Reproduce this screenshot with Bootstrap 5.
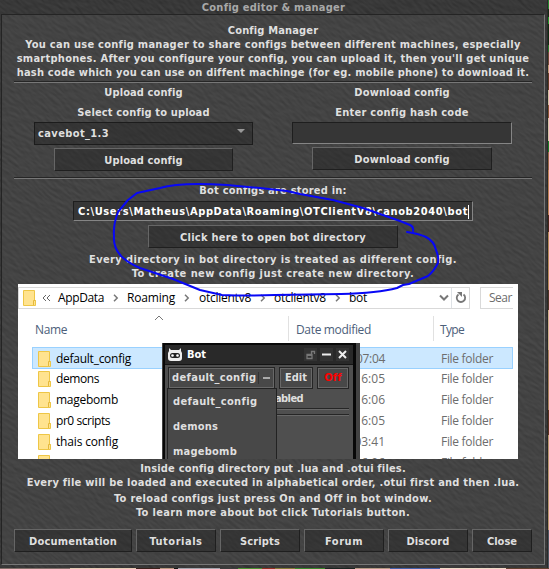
<!DOCTYPE html>
<html lang="en">
<head>
<meta charset="utf-8">
<meta name="viewport" content="width=device-width, initial-scale=1">
<title>Config editor &amp; manager</title>
<link rel="stylesheet" href="https://cdn.jsdelivr.net/npm/bootstrap@5.3.0/dist/css/bootstrap.min.css">
<style>
html,body{height:569px}
body{width:549px;background:#353535;color:#dfdfdf;font:bold 11px/14px "DejaVu Sans Condensed","DejaVu Sans",sans-serif;font-stretch:condensed}
.stage{width:549px;height:569px}
.stone{left:-156px;top:-146px;transform:rotate(40deg);pointer-events:none}
.layer{z-index:1;width:547px;height:568px}
.titlebar{height:14px;color:#a8a8a8}
.panel-body{height:551px;margin:0 2px 0 1px;border:1px solid #242424;border-right:1px solid #777;border-bottom:1px solid #777;background:rgba(255,255,255,.06);padding:8px 12px 0}
.ln{height:14px;line-height:16px;white-space:nowrap;text-align:center}
.rule{height:2px;background:#262626;border-bottom:1px solid #777}
.rule-top{margin:2px 0}
.col-half{width:259px}
.btn.stone-btn{font:inherit;color:#dfdfdf;height:23px;padding:0;border-radius:0;border:1px solid #1f1f1f;border-top-color:#666;border-left-color:#666;background:rgba(28,28,28,.36);line-height:23px;white-space:nowrap}
.combo{width:219px;height:23px;border:1px solid #1c1c1c;background:rgba(28,28,28,.36);padding:0 7px 0 3px}
.arrow-down{border:4px solid transparent;border-top:4px solid #999;border-bottom:0;margin-top:-6px}
.field{border:1px solid #1e1e1e;border-right-color:#858585;border-bottom-color:#858585;background:#363636;color:#fff;white-space:nowrap}
.caret{width:1px;height:14px;background:#fff}
.explorer{width:500px;height:175px;margin-left:4px;background:#fff;color:#000;font:12px/20px "Open Sans","Noto Sans",sans-serif;overflow:hidden}
.explorer span{white-space:nowrap}
.addr{width:452px;height:22px;margin-left:0;border:1px solid #d9d9d9}
.crumb{flex:none}
.search{width:33px;height:22px;border:1px solid #d9d9d9;border-right:0;color:#6d6d6d;padding-left:8px}
.heads{height:36px;color:#4c607a}
.vline{width:1px;height:25px;background:#e1e1e1;margin-top:7px}
.filerow{height:21px;width:481px;margin-left:14px;padding-left:6px;color:#6d6d6d}
.filerow .fname{color:#000;width:298px;margin-left:5px}
.filerow .ftime{width:31px;text-align:right;margin-right:56px}
.filerow.sel{background:#cce8ff;box-shadow:inset 0 0 0 1px #99d1ff;height:22px;margin-bottom:-1px;padding-top:1px}
.botwin{left:144px;top:59px;width:198px;height:116px;background:#424242;font:bold 11px/14px "DejaVu Sans Condensed","DejaVu Sans",sans-serif;font-stretch:condensed;color:#dfdfdf}
.botframe{width:193px;height:120px;background:#4f4f4f;border:solid #080808;border-width:2px 3px 0 2px;margin-left:1px}
.bottitle{height:20px;background:#292929;border-bottom:1px solid #151515;color:#fff;padding:0 4px 0 3px}
.sq{width:13px;height:13px;background:#333}
.dark-btn{height:22px;border:1px solid #252525;box-shadow:inset 0 0 0 1px #686868;background:#484848}
.drop{left:5px;top:45px;width:110px;height:76px;background:#484848;border:1px solid #222}
.drop div{height:25px;line-height:25px;padding-left:5px}
.game-r{left:547px;top:0;width:2px;height:569px;border-left:1px solid #2a2a2a;background:linear-gradient(#22832c 0 9px,#142b12 0 17px,#229026 0 24px,#0f2b10 0 45px,#287829 0 52px,#6c4732 0 65px,#c29b76 0 73px,#633a22 0 90px,#d4c0a0 0 105px,#875331 0 118px,#d9c4a7 0 141px,#1b7c23 0 152px,#9b6645 0 170px,#bd8053 0 215px,#4b2417 0 232px,#b78957 0 290px,#4d3323 0 310px,#d2b18b 0 350px,#a98059 0 410px,#5a301c 0 435px,#b9966c 0 530px,#4d5560 0)}
.game-b{left:0;top:568px;width:549px;height:1px;background:linear-gradient(90deg,#83706a 0 70px,#e8cdb5 0 136px,#3b201a 0 160px,#bd9a82 0 174px,#111 0 178px,#a5a5ae 0 220px,#3d3d3d 0 238px,#4c9431 0 262px,#962f22 0 275px,#857b35 0 295px,#3a8b2a 0 325px,#1b2520 0 355px,#b89b85 0 390px,#4462ad 0 440px,#f1dbc7 0 506px,#63412f 0)}
.ink{inset:0;z-index:5;pointer-events:none}
</style>
<script src="https://cdn.jsdelivr.net/npm/bootstrap@5.3.0/dist/js/bootstrap.bundle.min.js"></script>
</head>
<body class="m-0 overflow-hidden">
<svg width="0" height="0" class="position-absolute">
  <symbol id="folder" viewBox="0 0 13 16"><path d="M.5.5h11v10h1v5H.5z" fill="#ffe38f" stroke="#eec646"/><path d="M10.500 15v-4.500h2" fill="none" stroke="#e5b93c"/></symbol>
  <symbol id="chev" viewBox="0 0 6 8"><path d="M1 .8 4.200 4 1 7.200" fill="none" stroke="#777" stroke-width="1.500"/></symbol>
</svg>
<div class="stage position-relative overflow-hidden">
  <svg class="stone position-absolute" width="860" height="860">
    <filter id="rock" x="0" y="0" width="100%" height="100%" color-interpolation-filters="sRGB">
      <feTurbulence type="fractalNoise" baseFrequency=".1 .34" numOctaves="3" seed="8" result="n"/>
      <feDiffuseLighting in="n" surfaceScale=".5" lighting-color="#fff"><feDistantLight azimuth="240" elevation="55"/></feDiffuseLighting>
      <feColorMatrix values=".27 0 0 0 0  .27 0 0 0 0  .27 0 0 0 0  0 0 0 0 1"/>
    </filter>
    <rect width="860" height="860" filter="url(#rock)"/>
  </svg>
  <main class="layer position-relative">
    <header class="titlebar ln"><span data-w="143">Config editor &amp; manager</span></header>
    <section class="panel-body d-flex flex-column">
      <div class="ln"><span data-w="90">Config Manager</span></div>
      <div class="ln"><span data-w="494">You can use config manager to share configs between different machines, especially</span></div>
      <div class="ln"><span data-w="512">smartphones. After you configure your config, you can upload it, then you'll get unique</span></div>
      <div class="ln"><span data-w="512">hash code which you can use on diffent machinge (for eg. mobile phone) to download it.</span></div>
      <div class="rule rule-top"></div>
      <div class="d-flex" style="height:92px">
        <div class="col-half d-flex flex-column align-items-center">
          <div class="ln"><span data-w="78">Upload config</span></div>
          <div class="ln" style="margin:6px 0 3px"><span data-w="132">Select config to upload</span></div>
          <div class="combo d-flex align-items-center justify-content-between"><span data-w="71">cavebot_1.3</span><i class="arrow-down"></i></div>
          <button class="btn stone-btn" style="width:179px;margin-top:3px"><span data-w="78">Upload config</span></button>
        </div>
        <div class="col-half d-flex flex-column align-items-center" style="width:258px">
          <div class="ln"><span data-w="95">Download config</span></div>
          <div class="ln" style="margin:6px 0 3px"><span data-w="133">Enter config hash code</span></div>
          <div class="field" style="width:220px;height:22px"></div>
          <button class="btn stone-btn" style="width:180px;margin-top:3px"><span data-w="95">Download config</span></button>
        </div>
      </div>
      <div class="rule"></div>
      <div class="ln mt-1"><span data-w="147">Bot configs are stored in:</span></div>
      <div class="field d-flex align-items-center align-self-center ps-1" style="width:400px;height:20px;margin-top:4px;padding-top:2px"><span data-w="390">C:\Users\Matheus\AppData\Roaming\OTClientV8\canob2040\bot</span><i class="caret"></i></div>
      <button class="btn stone-btn align-self-center mt-1" style="width:250px"><span data-w="186">Click here to open bot directory</span></button>
      <div class="ln mt-1"><span data-w="367">Every directory in bot directory is treated as different config.</span></div>
      <div class="ln mb-1"><span data-w="282">To create new config just create new directory.</span></div>
      <div class="explorer position-relative flex-shrink-0">
        <div class="d-flex justify-content-between" style="padding:3px 5px 0 0">
          <div class="addr d-flex align-items-center">
            <svg class="crumb" width="13" height="16" style="margin-left:4px"><use href="#folder"/></svg>
            <svg class="crumb" width="9" height="8" style="margin-left:6px"><path d="M4 1 1 4l3 3M8 1 5 4l3 3" fill="none" stroke="#666"/></svg>
            <span data-w="46" style="margin-left:7px">AppData</span>
            <svg class="crumb" width="6" height="8" style="margin-left:9px;margin-right:8px"><use href="#chev"/></svg>
            <span data-w="48">Roaming</span>
            <svg class="crumb" width="6" height="8" style="margin-left:9px;margin-right:9px"><use href="#chev"/></svg>
            <span data-w="52">otclientv8</span>
            <svg class="crumb" width="6" height="8" style="margin-left:9px;margin-right:8px"><use href="#chev"/></svg>
            <span data-w="52">otclientv8</span>
            <svg class="crumb" width="6" height="8" style="margin-left:9px;margin-right:8px"><use href="#chev"/></svg>
            <span data-w="18">bot</span>
            <svg class="ms-auto" width="10" height="8"><path d="M1 1.500 5 5.500 9 1.500" fill="none" stroke="#777" stroke-width="2"/></svg>
            <span class="border-start d-flex align-items-center justify-content-center" style="height:20px;width:18px;margin-left:2px"><svg width="12" height="14"><path d="M8.500 3.500A4.200 4.200 0 1 1 3.500 3.400" fill="none" stroke="#777" stroke-width="1.800"/><path d="M2 1h5v5z" fill="#777"/></svg></span>
          </div>
          <div class="search"><span data-w="23">Sear</span></div>
        </div>
        <div class="heads d-flex">
          <span data-w="32" style="margin:11px 87px 0 17px">Name</span>
          <svg width="10" height="6" style="margin-top:6px"><path d="M1 5 5 1 9 5" fill="none" stroke="#777"/></svg>
          <i class="vline" style="margin-left:124px"></i>
          <span data-w="75" style="margin:11px 62px 0 7px">Date modified</span>
          <i class="vline"></i>
          <span data-w="24" style="margin:11px 0 0 6px">Type</span>
        </div>
        <div style="padding-top:2px">
          <div class="filerow sel d-flex align-items-center"><svg width="13" height="16"><use href="#folder"/></svg><div class="fname"><span data-w="75">default_config</span></div><span class="ftime" data-w="29">07:04</span><span data-w="52">File folder</span></div>
          <div class="filerow d-flex align-items-center"><svg width="13" height="16"><use href="#folder"/></svg><div class="fname"><span data-w="43">demons</span></div><span class="ftime">16:05</span><span data-w="52">File folder</span></div>
          <div class="filerow d-flex align-items-center"><svg width="13" height="16"><use href="#folder"/></svg><div class="fname"><span data-w="62">magebomb</span></div><span class="ftime">16:06</span><span data-w="52">File folder</span></div>
          <div class="filerow d-flex align-items-center"><svg width="13" height="16"><use href="#folder"/></svg><div class="fname"><span data-w="54">pr0 scripts</span></div><span class="ftime">16:05</span><span data-w="52">File folder</span></div>
          <div class="filerow d-flex align-items-center"><svg width="13" height="16"><use href="#folder"/></svg><div class="fname"><span data-w="62">thais config</span></div><span class="ftime">03:41</span><span data-w="52">File folder</span></div>
          <div class="filerow d-flex align-items-center"><svg width="13" height="16"><use href="#folder"/></svg><div class="fname"></div><span class="ftime">16:06</span><span data-w="52">File folder</span></div>
        </div>
        <div class="botwin position-absolute overflow-hidden">
          <div class="botframe">
            <div class="bottitle d-flex align-items-center">
              <svg width="14" height="14"><path d="M1 0 3 2h8l2-2v3l1 2v5q0 3-3 3H3q-3 0-3-3V5l1-2z" fill="#eee"/><rect x="2" y="5" width="10" height="5" rx="2.500" fill="#222"/><circle cx="4.500" cy="7.500" r="1.300" fill="#fff"/><circle cx="9.500" cy="7.500" r="1.300" fill="#fff"/></svg>
              <span data-w="19" style="margin-left:5px">Bot</span>
              <svg class="sq ms-auto" viewBox="0 0 13 13"><path d="M3 6.500h5v4H3zM7.500 6V3.500h3V6" fill="none" stroke="#777" stroke-width="1.300"/><path d="M3 7h5v1H3z" fill="#777"/></svg>
              <svg class="sq" viewBox="0 0 13 13" style="margin-left:3px"><path d="M2 6.500h9" stroke="#eee" stroke-width="2"/></svg>
              <svg class="sq" viewBox="0 0 13 13" style="margin-left:3px"><path d="m3 3 7 7m0-7-7 7" stroke="#eee" stroke-width="2"/></svg>
            </div>
            <div class="d-flex" style="padding:2px 0 0 3px;gap:4px">
              <div class="dark-btn d-flex align-items-center" style="width:107px;padding-left:3px"><span data-w="84">default_config</span><i style="width:1px;height:12px;background:#333;margin:0 4px 0 2px"></i><i style="width:7px;height:2px;background:#aaa"></i></div>
              <div class="dark-btn d-flex align-items-center justify-content-center" style="width:34px"><span data-w="22">Edit</span></div>
              <div class="dark-btn d-flex align-items-center justify-content-center" style="width:32px;color:#f00"><span data-w="17">Off</span></div>
            </div>
            <div style="margin:3px 0 0 110px"><span data-w="28">abled</span></div>
            <div style="margin:2px 4px 0 108px;height:7px;border:solid #262626;border-width:1px 0;box-shadow:0 1px #686868,inset 0 1px #686868"></div>
          </div>
          <div class="drop position-absolute"><div><span data-w="84">default_config</span></div><div><span data-w="45">demons</span></div><div><span data-w="64">magebomb</span></div></div>
        </div>
      </div>
      <div class="ln" style="margin-top:2px"><span data-w="265">Inside config directory put .lua and .otui files.</span></div>
      <div class="ln"><span data-w="492">Every file will be loaded and executed in alphabetical order, .otui first and then .lua.</span></div>
      <div class="ln" style="margin-top:2px"><span data-w="317">To reload configs just press On and Off in bot window.</span></div>
      <div class="ln"><span data-w="274">To learn more about bot click Tutorials button.</span></div>
      <div class="d-flex gap-1" style="margin-top:10px">
        <button class="btn stone-btn" style="width:118px"><span data-w="88">Documentation</span></button>
        <button class="btn stone-btn" style="width:80px"><span data-w="53">Tutorials</span></button>
        <button class="btn stone-btn" style="width:80px"><span data-w="40">Scripts</span></button>
        <button class="btn stone-btn" style="width:80px"><span data-w="38">Forum</span></button>
        <button class="btn stone-btn" style="width:80px"><span data-w="43">Discord</span></button>
        <button class="btn stone-btn" style="width:60px"><span data-w="30">Close</span></button>
      </div>
    </section>
  </main>
  <div class="game-r position-absolute"></div>
  <div class="game-b position-absolute"></div>
  <svg class="ink position-absolute" width="549" height="569"><path d="M413 231Q414 227 410 225L400 221 380 214 363 208 333 200 300 194 287 191 260 188 227 185Q180 182 160 188L137 193 128 200 118 212Q113 225 114 236 113 248 122 257 130 264 140 268L173 279 200 290 222 295Q250 296 275 295L341 294Q378 293 397 288L403 285 409 284 428 276Q434 271 438 263 439 257 436 250 434 241 426 237 420 234 407 232" fill="none" stroke="#0808f5" stroke-width="2" stroke-linecap="round" stroke-linejoin="round"/></svg>
</div>
<script>
// Tracks each label so that it fills the width given in data-w.
document.querySelectorAll('[data-w]').forEach(function (el) {
  var r = document.createRange();
  r.selectNodeContents(el);
  var gap = (el.dataset.w - r.getBoundingClientRect().width) / el.textContent.length;
  el.style.letterSpacing = gap.toFixed(3) + 'px';
});
</script>
</body>
</html>
